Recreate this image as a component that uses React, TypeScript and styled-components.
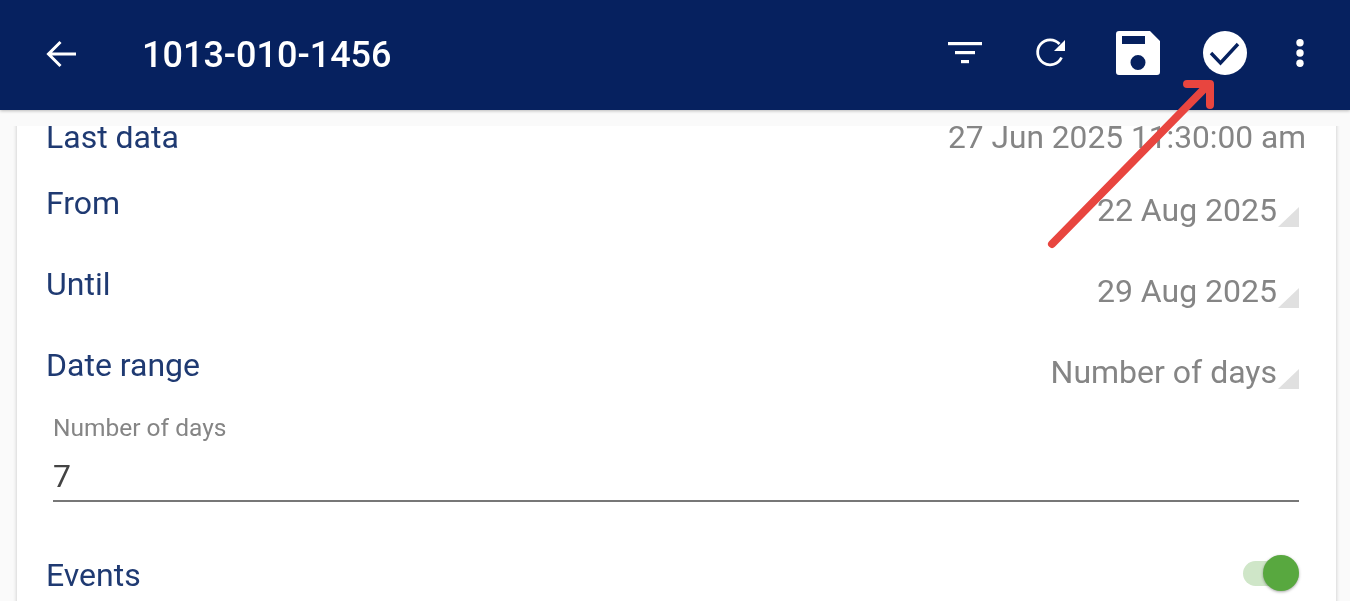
import React from 'react';
import styled, { createGlobalStyle } from 'styled-components';

const GlobalStyle = createGlobalStyle`
    html, body {
        margin: 0;
        padding: 0;
        background: #fafafa;
        font-family: Roboto, "Liberation Sans", sans-serif;
    }
`;

const rows = [
    { label: 'From', value: '22 Aug 2025' },
    { label: 'Until', value: '29 Aug 2025' },
    { label: 'Date range', value: 'Number of days' },
];

const App = () => {
    return (
        <Page>
            <GlobalStyle />
            <Toolbar>
                <BackButton aria-label="Back">
                    <svg width="30" height="28" viewBox="0 0 30 28" fill="none" stroke="#fff" strokeWidth="3">
                        <path d="M30 14H3M14.5 2 2.5 14 14.5 26" />
                    </svg>
                </BackButton>
                <Title>1013-010-1456</Title>
                <Actions>
                    <Action>
                        <svg width="34" height="22" viewBox="0 0 34 22" fill="#fff">
                            <rect x="0" y="0" width="34" height="3.2" />
                            <rect x="7" y="9" width="20" height="3.2" />
                            <rect x="13" y="18" width="8" height="3.2" />
                        </svg>
                    </Action>
                    <Action>
                        <svg width="32" height="32" viewBox="0 0 32 32" fill="none">
                            <path d="M26.5 20.5A12.5 12.5 0 1 1 24.5 7" stroke="#fff" strokeWidth="2.8" />
                            <path d="M30 3v11H19z" fill="#fff" />
                        </svg>
                    </Action>
                    <Action>
                        <svg width="44" height="44" viewBox="0 0 44 44">
                            <path
                                fillRule="evenodd"
                                fill="#fff"
                                d="M3 0H34L44 10V41A3 3 0 0 1 41 44H3A3 3 0 0 1 0 41V3A3 3 0 0 1 3 0ZM6 5V13H29V5ZM22 24A7.5 7.5 0 1 0 22 39 7.5 7.5 0 0 0 22 24Z"
                            />
                        </svg>
                    </Action>
                    <Action>
                        <svg width="44" height="44" viewBox="0 0 44 44">
                            <circle cx="22" cy="22" r="22" fill="#fff" />
                            <path d="M8 22 17.5 32 35 13" fill="none" stroke="#06215f" strokeWidth="3.4" />
                        </svg>
                    </Action>
                    <Action $narrow>
                        <svg width="8" height="30" viewBox="0 0 8 30" fill="#fff">
                            <circle cx="4" cy="4.7" r="3.7" />
                            <circle cx="4" cy="15" r="3.7" />
                            <circle cx="4" cy="25.3" r="3.7" />
                        </svg>
                    </Action>
                </Actions>
            </Toolbar>
            <ScrollArea>
                <Card>
                    <LastDataRow>
                        <RowLabel>Last data</RowLabel>
                        <LastDataValue>27 Jun 2025 11:30:00 am</LastDataValue>
                    </LastDataRow>
                    {rows.map(row => (
                        <SelectRow key={row.label}>
                            <RowLabel>{row.label}</RowLabel>
                            <SelectValue>
                                {row.value}
                                <Caret />
                            </SelectValue>
                        </SelectRow>
                    ))}
                    <Field>
                        <FieldLabel>Number of days</FieldLabel>
                        <FieldValue>7</FieldValue>
                    </Field>
                    <ToggleRow>
                        <RowLabel>Events</RowLabel>
                        <Toggle>
                            <ToggleKnob />
                        </Toggle>
                    </ToggleRow>
                </Card>
            </ScrollArea>
            <Arrow width="180" height="190" viewBox="0 0 180 190" fill="none" stroke="#e8453f" strokeWidth="8" strokeLinecap="round" strokeLinejoin="round">
                <path d="M12 184 165 28" />
                <path d="M147 24 170 24 170 45" />
            </Arrow>
        </Page>
    );
};

export default App;

const Page = styled.div`
    position: relative;
    display: flex;
    flex-direction: column;
    width: 1350px;
    height: 601px;
    overflow: hidden;
    background: #fafafa;
    filter: blur(0.5px);
`;

const Toolbar = styled.header`
    display: flex;
    flex: none;
    align-items: center;
    height: 110px;
    box-sizing: border-box;
    padding: 0 19px 0 46px;
    background: #06215f;
    box-shadow: 0 1px 3px rgba(0, 0, 0, 0.25);
    position: relative;
    z-index: 1;
`;

const BackButton = styled.div`
    display: flex;
    width: 97px;
    margin-bottom: 3px;
`;

const Title = styled.h1`
    margin: 0 0 0 -1px;
    color: #fff;
    font-size: 36px;
    font-weight: 500;
`;

const Actions = styled.div`
    display: flex;
    align-items: center;
    margin-left: auto;
    margin-bottom: 4px;
`;

const Action = styled.div<{ $narrow?: boolean }>`
    display: flex;
    justify-content: center;
    align-items: center;
    width: ${props => (props.$narrow ? '63px' : '86.67px')};
`;

const ScrollArea = styled.main`
    flex: 1;
    margin-top: 16px;
    padding: 0 14px 0 17px;
    overflow: hidden;
`;

const Card = styled.section`
    box-sizing: border-box;
    height: 520px;
    margin-top: -20px;
    padding: 20px 37px 0 29px;
    background: #fff;
    box-shadow: 0 0 4px rgba(0, 0, 0, 0.22);
`;

const RowLabel = styled.span`
    color: #1f3a72;
    font-size: 32px;
`;

const LastDataRow = styled.div`
    display: flex;
    justify-content: space-between;
    align-items: center;
    height: 22px;
`;

const LastDataValue = styled.span`
    margin-right: -7px;
    color: #858585;
    font-size: 31.7px;
`;

const SelectRow = styled.div`
    display: flex;
    justify-content: space-between;
    height: 81px;
    padding-top: 36px;
    box-sizing: border-box;
`;

const SelectValue = styled.div`
    display: flex;
    align-items: flex-end;
    height: 45px;
    color: #858585;
    font-size: 32px;
`;

const Caret = styled.span`
    width: 0;
    height: 0;
    margin-left: 1px;
    margin-bottom: 2px;
    border-style: solid;
    border-width: 0 0 20px 21px;
    border-color: transparent transparent #e0e0e0 transparent;
`;

const Field = styled.div`
    margin-left: 7px;
    padding: 22px 0 5px;
    border-bottom: 2px solid #777;
`;

const FieldLabel = styled.div`
    color: #858585;
    font-size: 24.5px;
`;

const FieldValue = styled.div`
    color: #444;
    font-size: 32px;
    padding-top: 15px;
`;

const ToggleRow = styled.div`
    display: flex;
    justify-content: space-between;
    align-items: center;
    margin-top: 54px;
`;

const Toggle = styled.div`
    position: relative;
    width: 56px;
    height: 25px;
    margin-bottom: 4px;
    border-radius: 13px;
    background: #cfe6c8;
`;

const ToggleKnob = styled.span`
    position: absolute;
    top: -6px;
    right: 0;
    width: 36px;
    height: 36px;
    border-radius: 50%;
    background: #58a83f;
    box-shadow: 0 1px 3px rgba(0, 0, 0, 0.35);
`;

const Arrow = styled.svg`
    position: absolute;
    left: 1040px;
    top: 60px;
    z-index: 2;
`;
